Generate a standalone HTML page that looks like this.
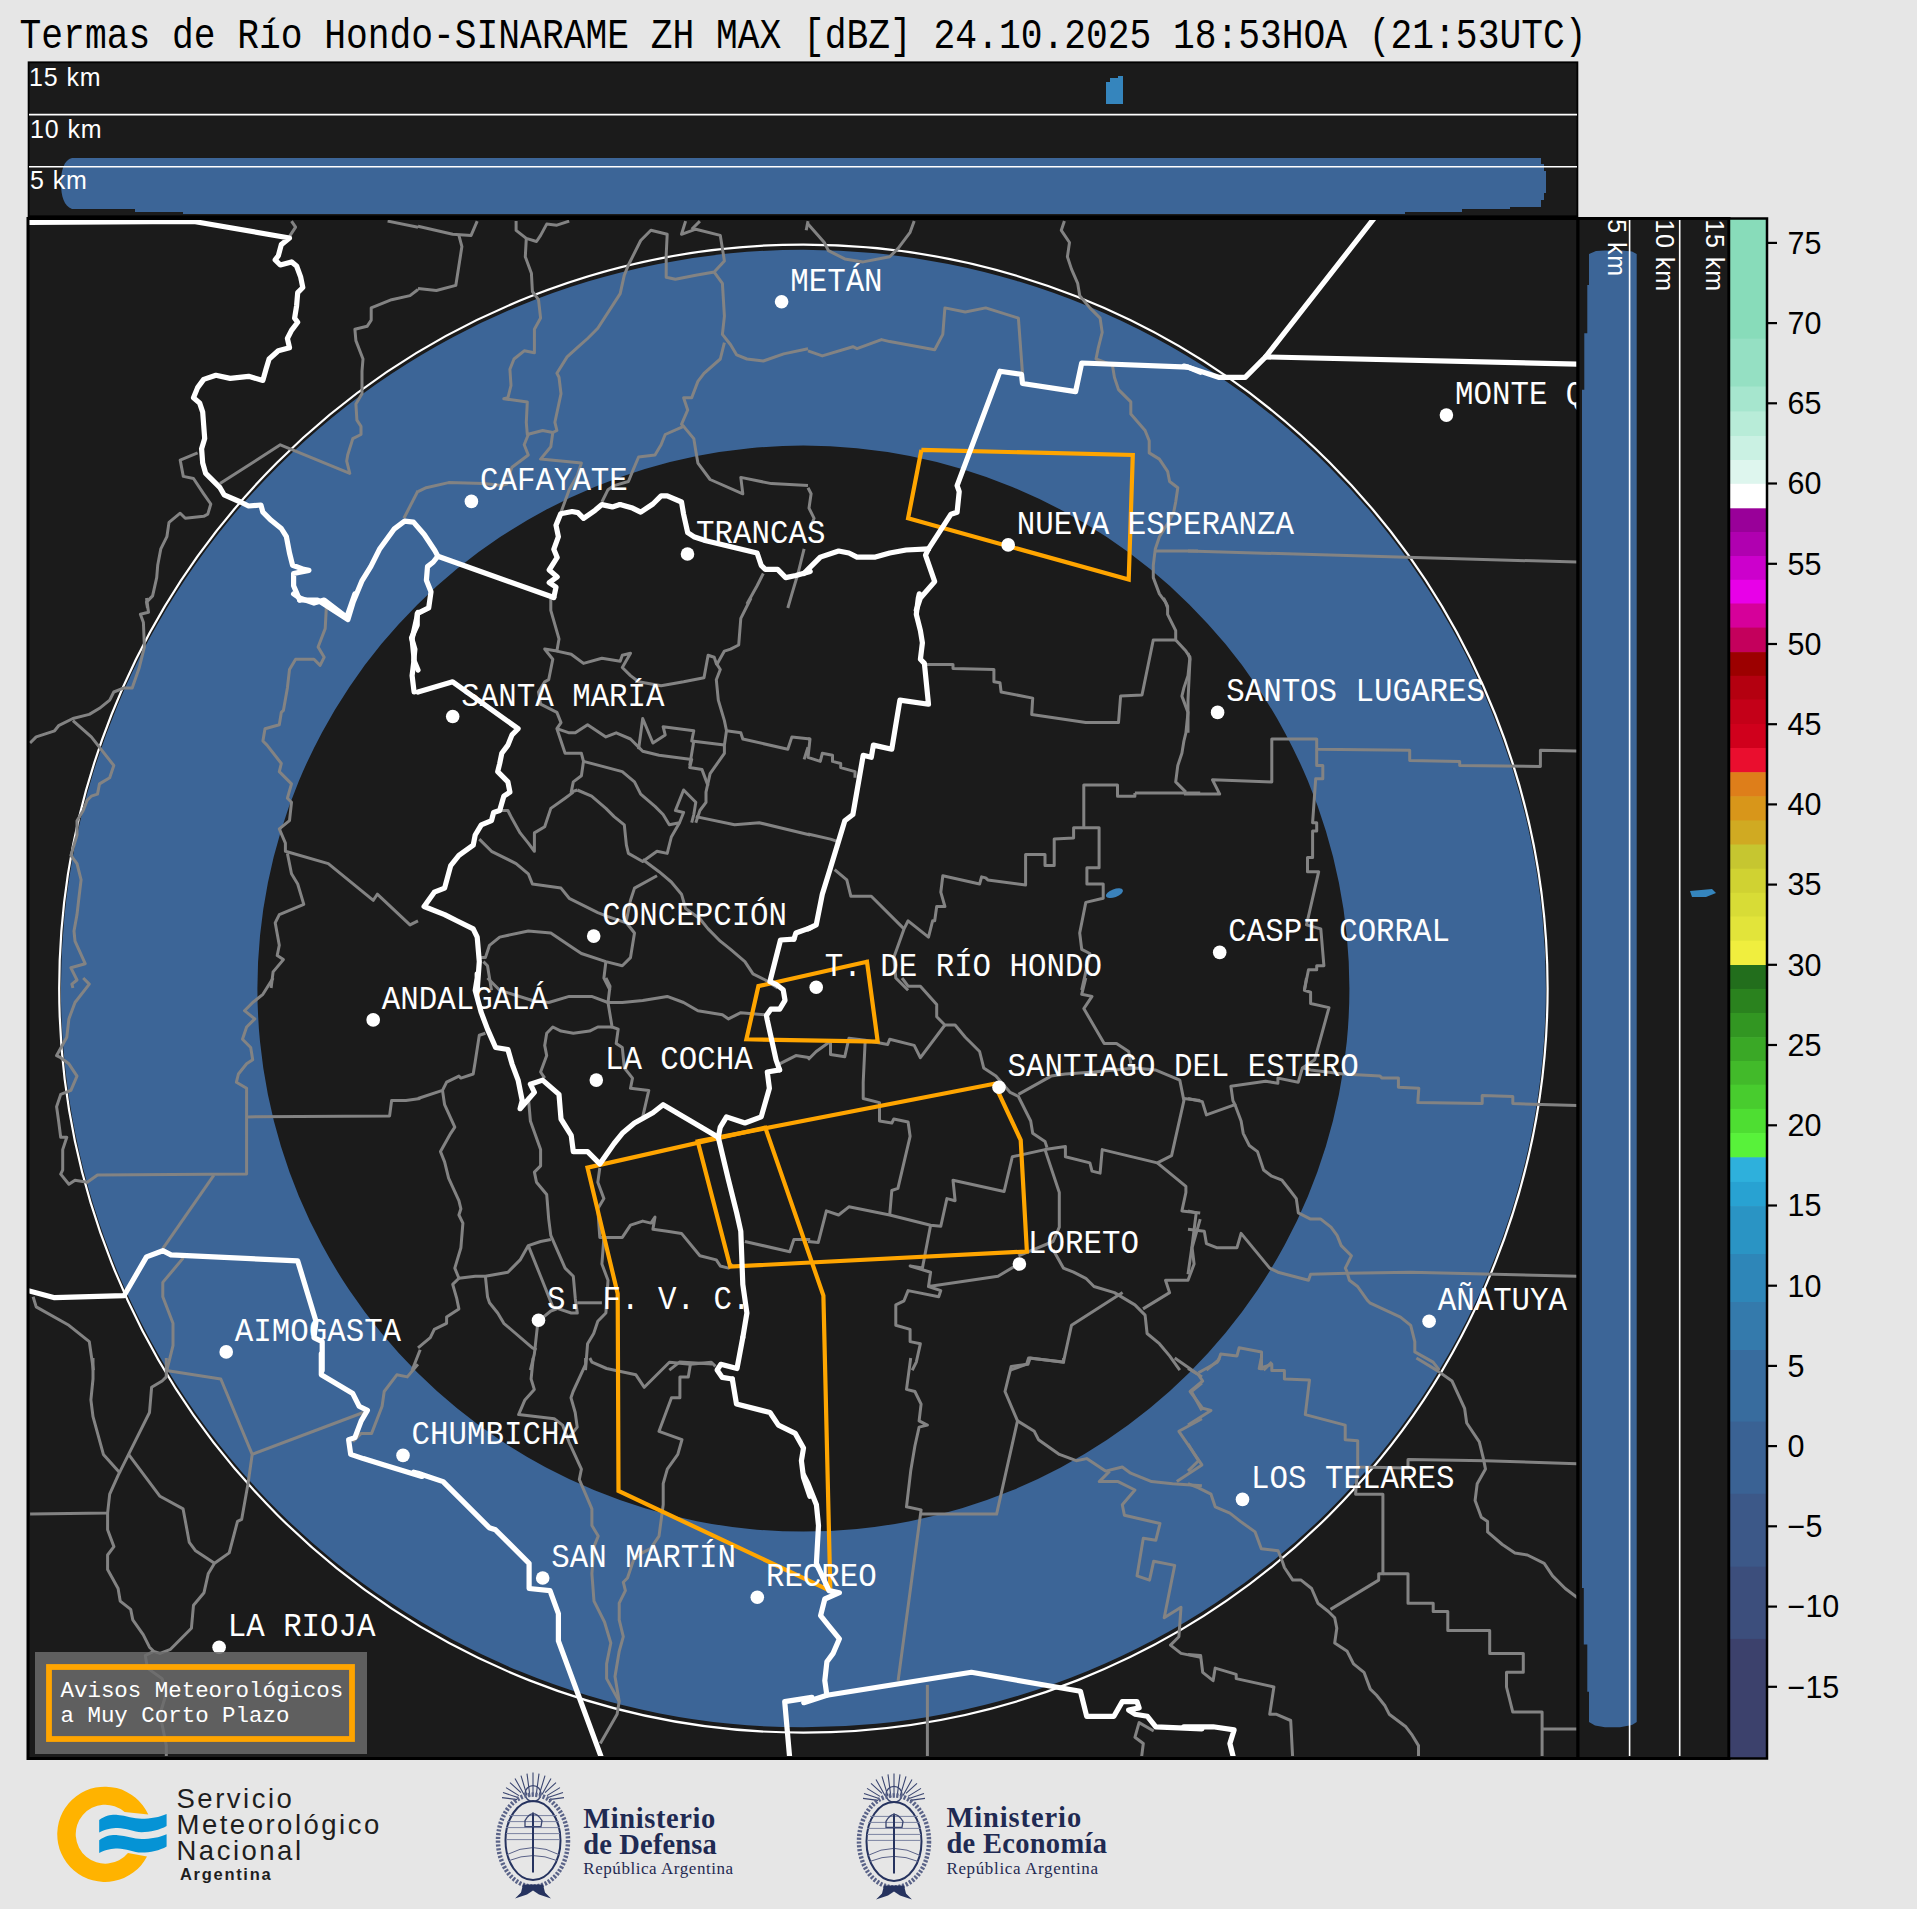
<!DOCTYPE html>
<html><head><meta charset="utf-8">
<style>
html,body{margin:0;padding:0;background:#e6e6e6;width:1917px;height:1909px;overflow:hidden}
svg{position:absolute;left:0;top:0}
</style></head><body>
<svg width="1917" height="1909" viewBox="0 0 1917 1909" xmlns="http://www.w3.org/2000/svg">
<defs>
<clipPath id="mapclip"><rect x="29.5" y="220" width="1547" height="1536"/></clipPath>
<clipPath id="topclip"><rect x="29" y="63" width="1548" height="153"/></clipPath>
<clipPath id="rpclip"><rect x="1579.5" y="220" width="149" height="1536"/></clipPath>
<g id="coat">
 <g stroke="#3a4570" stroke-width="1.1" fill="none">
  <path d="M0,-68 L0,-44 M-6,-67 L-3,-44 M6,-67 L3,-44 M-12,-65 L-6,-45 M12,-65 L6,-45 M-18,-62 L-9,-46 M18,-62 L9,-46 M-23,-58 L-12,-48 M23,-58 L12,-48 M-27,-53 L-14,-45 M27,-53 L14,-45 M-30,-48 L-15,-43 M30,-48 L15,-43 M-31,-43 L-16,-41 M31,-43 L16,-41"/>
 </g>
 <circle cx="0" cy="-47" r="8" fill="none" stroke="#3a4570" stroke-width="1.3"/>
 <ellipse cx="0" cy="0" rx="35" ry="46" fill="none" stroke="#5a6388" stroke-width="4.5" stroke-dasharray="2.2 1.6"/>
 <ellipse cx="0" cy="0" rx="27.5" ry="39.5" fill="none" stroke="#26335f" stroke-width="2"/>
 <g stroke="#7a82a0" stroke-width="1"><path d="M-24,-25 H24 M-26,-19 H26 M-27,-13 H27 M-27,-7 H27 M-27,-1 H27"/></g>
 <path d="M-26,14 Q0,0 26,14 M-24,20 Q0,10 24,20" stroke="#5a6288" stroke-width="1" fill="none"/>
 <path d="M0,-28 L0,32" stroke="#26335f" stroke-width="2"/>
 <path d="M-8,-20 Q0,-34 9,-20 L8,-14 L-8,-14 Z" fill="none" stroke="#3a4570" stroke-width="1.3"/>
 <path d="M-10,44 L10,44 L12,52 L18,58 L6,54 L0,50 L-6,54 L-18,58 L-12,52 Z" fill="#26335f"/>
</g>
</defs>

<text transform="translate(19.6,47.6) scale(1,1.15)" x="0" y="0" font-family="Liberation Mono" font-size="36.28" fill="#000">Termas de Río Hondo-SINARAME ZH MAX [dBZ] 24.10.2025 18:53HOA (21:53UTC)</text>

<!-- top panel -->
<rect x="28.6" y="62.3" width="1548.8" height="154" fill="#1b1b1b" stroke="#000" stroke-width="1.8"/>
<g clip-path="url(#topclip)">
<path d="M72,158 H1541 V164 H1544 V171 H1546 V193 H1544 V200 H1541 V207 H1510 V209 H1462 V212 H1405 V214 H183 V212 H135 V209 H72 C64,206 61,196 61,183 C61,170 64,160 72,158 Z" fill="#3c6597"/>
<path d="M1106,82 h4 v-4 h8 v-2 h5 v28 h-17 Z" fill="#3585bd"/>
<line x1="29" y1="114.6" x2="1577" y2="114.6" stroke="#fff" stroke-width="1.6"/>
<line x1="29" y1="166.8" x2="1577" y2="166.8" stroke="#fff" stroke-width="1.6"/>
<g font-family="Liberation Sans" font-size="25" letter-spacing="0.9" fill="#fff">
<text x="29" y="86.1">15 km</text><text x="30" y="138">10 km</text><text x="30" y="188.8">5 km</text>
</g>
</g>

<!-- main map -->
<rect x="28" y="218.5" width="1550" height="1540" fill="#1b1b1b" stroke="#000" stroke-width="3"/>
<g clip-path="url(#mapclip)">
<path fill-rule="evenodd" fill="#3c6597" d="M60.9,988.6 a742.5,738.5 0 1,0 1485,0 a742.5,738.5 0 1,0 -1485,0 Z M257.4,988.6 a546,543 0 1,0 1092,0 a546,543 0 1,0 -1092,0 Z"/>
<ellipse cx="803.4" cy="988.6" rx="744.2" ry="744" fill="none" stroke="#fff" stroke-width="2.2"/>
<ellipse cx="1114.4" cy="893.2" rx="9" ry="4" transform="rotate(-20 1114.4 893.2)" fill="#3a82bb"/>
<g fill="none" stroke="#838383" stroke-width="3" stroke-linejoin="round"><path d="M291.5,221.1 L295.6,227.2 L289.5,236.4"/><path d="M387.6,221.1 L418.0,227.2"/><path d="M418.0,289.5 L410.0,295.6 L391.6,299.7 L371.2,307.9 L371.2,320.1 L367.1,326.3 L354.9,329.3 L355.9,340.6 L363.0,359.0 L362.0,371.2 L362.0,393.7 L355.9,403.9 L356.9,420.2 L361.0,426.4 L361.0,434.5 L352.8,438.6 L347.7,455.0 L346.7,461.1 L349.8,473.4 L280.3,444.8 L220.0,483.6"/><path d="M197.6,452.9 L180.2,460.1 L183.3,476.4 L193.5,478.5 L203.7,493.8 L210.8,504.0 L207.8,514.2 L203.7,516.3 L185.3,518.3 L180.2,513.2 L169.0,522.4 L166.9,536.7 L160.8,548.9 L157.7,565.3 L156.7,577.6 L152.6,595.9 L146.5,602.1 L147.5,608.0"/><path d="M418.0,490.7 L403.9,518.3"/><path d="M418.0,226.2 L452.7,234.3 L471.1,235.4 L477.2,221.1"/><path d="M458.9,235.4 L461.9,246.6 L455.8,285.4 L436.4,290.5 L418.0,288.5"/><path d="M516.1,221.1 L516.1,230.3 L526.3,238.4 L536.5,241.5 L540.6,235.4 L546.7,224.1 L556.9,225.2 L569.2,221.1"/><path d="M526.3,238.4 L525.3,256.8 L531.4,273.2 L532.4,291.5 L538.5,299.7 L540.6,318.1 L534.4,329.3 L534.4,338.5 L534.4,352.8 L524.2,350.8 L514.0,359.0 L509.9,369.2 L511.0,385.5 L507.9,397.8 L503.8,398.8 L527.3,401.9 L526.3,422.3 L527.3,434.5 L542.6,430.5 L552.8,432.5 L556.9,430.5 L554.9,422.3 L561.0,393.7 L559.0,377.3 L556.9,373.3 L567.1,356.9 L577.3,347.7 L587.6,338.5 L597.8,328.3 L620.2,293.6 L624.3,275.2 L628.4,265.0 L640.7,240.5 L650.9,230.3 L667.2,234.3 L666.2,254.8 L666.2,277.2 L675.4,279.3 L695.8,275.2 L714.2,272.1 L724.4,260.9 L720.3,235.4 L695.8,229.2 L681.5,234.3 L685.6,221.1"/><path d="M699.9,221.1 L691.7,229.2"/><path d="M714.2,272.1 L722.4,283.4 L724.4,316.1 L722.4,334.4 L730.6,344.7 L736.7,354.9 L746.9,359.0 L763.3,361.0 L783.7,353.9 L808.0,348.7"/><path d="M724.4,342.6 L720.3,359.0 L704.0,373.3 L697.9,381.4 L691.7,397.8 L683.6,397.8 L687.7,410.0 L681.5,424.3 L683.6,426.4 L665.2,434.5 L661.1,444.8 L655.0,455.0 L638.6,457.0 L632.5,471.3 L628.4,481.5 L614.1,485.6 L608.0,489.7 L601.9,502.0"/><path d="M552.8,432.5 L550.8,446.8 L540.6,459.1 L581.4,463.1 L577.3,475.4 L569.2,489.7 L561.0,512.2"/><path d="M528.3,434.5 L524.2,444.8 L528.3,455.0 L512.0,467.2 L507.9,477.4"/><path d="M418.0,491.7 L426.2,487.7 L448.6,482.6 L483.4,483.6 L501.8,485.6 L507.9,483.6"/><path d="M683.6,426.4 L693.8,438.6 L695.8,450.9 L697.9,463.1 L710.1,479.5 L742.8,493.8 L740.8,477.4 L771.4,483.6 L808.0,485.6"/><path d="M804.1,548.9 L798.0,573.5 L791.9,593.9 L787.8,608.0"/><path d="M763.3,573.5 L757.1,585.7 L746.9,604.1"/><path d="M808.0,221.1 L806.2,230.3"/><path d="M808.0,224.1 L824.3,242.5 L828.4,250.7 L844.8,258.9 L863.2,261.9 L889.7,256.8 L897.9,248.6 L910.1,232.3 L914.2,221.1"/><path d="M808.0,350.8 L822.3,355.9 L852.9,346.7 L857.0,348.7 L881.5,339.6 L889.7,341.6 L934.7,349.8 L942.8,334.4 L944.9,307.9 L965.3,312.0 L985.7,307.9 L1018.4,318.1 L1022.5,373.3"/><path d="M1064.4,221.1 L1061.3,230.3 L1069.5,242.5 L1067.4,256.8 L1071.5,269.1 L1077.7,283.4 L1079.7,295.6 L1089.9,307.9 L1100.1,318.1 L1102.2,332.4 L1098.1,348.7 L1096.0,359.0 L1112.4,365.1 L1114.4,377.3 L1118.5,389.6 L1130.8,401.9 L1130.8,414.1 L1145.1,430.5 L1149.2,440.7 L1149.2,452.9 L1159.4,459.1 L1167.6,471.3 L1169.6,481.5 L1177.8,487.7 L1175.7,502.0 L1173.7,512.2 L1169.6,520.3 L1159.4,536.7 L1155.3,548.9 L1153.3,565.3 L1153.3,577.6 L1159.4,593.9 L1165.5,602.1 L1167.6,608.0"/><path d="M1155.3,551.0 L1198.0,551.0"/><path d="M808.0,487.7 L811.1,493.8 L809.0,508.1 L814.1,518.3 L810.0,528.5"/><path d="M1188.0,551.0 L1580.2,562.2"/><path d="M146.5,598.0 L148.5,612.3 L140.4,614.3 L143.4,622.5 L144.4,647.0 L139.3,667.5 L132.2,687.9 L124.0,687.9 L113.8,692.0 L109.7,700.1 L99.5,708.3 L89.3,714.4 L72.9,718.5 L58.6,725.7 L54.6,730.8 L36.2,736.9 L30.0,743.0"/><path d="M72.9,720.6 L91.3,736.9 L113.8,765.5 L109.7,777.8 L99.5,783.9 L97.5,794.1 L91.3,796.2 L87.2,800.2 L83.2,810.5 L77.0,820.7 L77.0,835.0 L70.9,855.4 L77.0,863.6 L81.1,879.9 L79.1,896.3 L77.0,914.6 L74.0,931.0 L75.0,941.2 L85.2,963.7 L70.9,967.8 L77.0,980.0 L71.9,984.1 L72.9,988.0"/><path d="M326.3,608.2 L325.2,628.6 L318.1,647.0 L324.2,657.2 L320.1,665.4 L314.0,659.3 L295.6,659.3 L289.5,669.5 L287.4,687.9 L283.4,710.4 L281.3,712.4 L279.3,724.7 L265.0,728.7 L262.9,741.0 L267.0,745.1 L281.3,763.5 L279.3,771.6 L291.5,783.9 L287.4,798.2 L291.5,802.3 L289.5,820.7 L279.3,828.8 L285.4,843.1 L285.4,851.3 L328.3,863.6 L373.3,900.3 L377.3,894.2 L410.0,924.9 L418.0,920.8"/><path d="M287.4,853.4 L291.5,873.8 L297.7,884.0 L303.8,904.4 L279.3,914.6 L275.2,922.8 L279.3,945.3 L277.2,955.5 L283.4,959.6 L273.1,971.9 L271.1,988.0"/><path d="M550.8,598.0 L550.8,610.3 L559.0,638.9 L556.9,651.1 L544.7,649.1 L552.8,659.3 L548.7,679.7 L544.7,681.8 L538.5,692.0 L540.6,704.2 L556.9,712.4 L561.0,722.6 L556.9,728.7 L565.1,753.3 L581.4,753.3 L583.5,761.4 L581.4,775.7 L573.3,781.9 L571.2,792.1 L577.3,790.0"/><path d="M556.9,651.1 L571.2,654.2 L583.5,663.4 L601.9,658.3 L620.2,661.3 L622.3,655.2 L630.5,653.2 L622.3,667.5 L630.5,675.6 L638.6,681.8 L661.1,685.8 L683.6,681.8 L704.0,677.7 L708.1,655.2 L714.2,657.2 L716.3,663.4 L720.3,669.5 L716.3,679.7 L718.3,700.1 L724.4,720.6 L726.5,730.8 L724.4,745.1 L724.4,753.3 L710.1,773.7 L706.0,792.1 L706.0,802.3 L699.9,810.5 L695.8,822.7"/><path d="M751.0,598.0 L740.8,618.4 L738.7,645.0 L730.6,649.1 L724.4,651.1 L716.3,665.4"/><path d="M556.9,728.7 L569.2,732.8 L575.3,732.8 L587.6,724.7 L605.9,736.9 L616.2,732.8 L630.5,739.0 L638.6,747.1 L642.7,751.2 L659.1,755.3 L691.7,759.4 L689.7,767.6 L702.0,769.6 L708.1,785.9"/><path d="M638.6,749.2 L642.7,718.5 L652.9,743.0 L665.2,734.9 L663.1,726.7 L693.8,730.8 L691.7,741.0 L724.4,745.1"/><path d="M693.8,741.0 L689.7,765.5"/><path d="M726.5,730.8 L740.8,732.8 L742.8,739.0 L787.8,749.2 L791.9,736.9 L810.2,739.0"/><path d="M808.0,747.1 L804.1,759.4"/><path d="M583.5,761.4 L622.3,771.6 L634.5,781.9 L640.7,794.1 L655.0,806.4 L663.1,814.5 L669.3,824.8 L679.5,822.7 L683.6,812.5 L675.4,810.5 L683.6,790.0 L695.8,802.3 L693.8,814.5 L691.7,822.7"/><path d="M573.3,792.1 L565.1,798.2 L550.8,808.4 L544.7,826.8 L534.4,832.9 L534.4,851.3 L528.3,843.1 L520.1,832.9 L512.0,818.6 L507.9,810.5 L499.7,810.5"/><path d="M577.3,790.0 L591.6,796.2 L605.9,808.4 L614.1,816.6 L624.3,824.8 L626.4,845.2 L628.4,853.4 L642.7,861.5 L657.0,851.3 L667.2,853.4 L671.3,837.0 L679.5,822.7"/><path d="M695.8,816.6 L734.6,824.8 L759.2,822.7 L810.2,835.0"/><path d="M642.7,859.5 L659.1,871.7 L671.3,882.0 L681.5,894.2 L685.6,908.5 L699.9,918.7 L708.1,928.9 L720.3,941.2 L730.6,949.4 L744.9,961.6 L753.0,973.9 L765.3,980.0 L777.6,988.0"/><path d="M479.3,839.1 L491.5,851.3 L516.1,863.6 L528.3,873.8 L532.4,884.0 L561.0,888.1 L569.2,898.3 L597.8,912.6 L608.0,916.7 L626.4,922.8 L634.5,933.0 L632.5,945.3 L630.5,957.6 L622.3,965.7 L605.9,961.6 L581.4,953.5 L575.3,949.4 L550.8,933.0 L528.3,931.0 L499.7,937.1 L489.5,945.3 L485.4,957.6 L479.3,957.6"/><path d="M657.0,875.8 L634.5,888.1 L630.5,900.3 L626.4,920.8"/><path d="M605.9,961.6 L603.9,978.0 L610.0,990.2"/><path d="M483.4,961.6 L487.5,965.7 L491.5,990.2"/><path d="M924.4,664.4 L953.0,664.4 L953.0,668.5 L993.9,669.5 L993.9,681.8 L1000.0,682.8 L1001.1,692.0 L1032.7,698.1 L1031.7,714.4 L1085.8,722.6 L1118.5,722.6 L1120.6,696.1 L1142.0,695.0 L1153.3,639.9 L1175.7,639.9"/><path d="M1163.5,598.0 L1167.6,606.2 L1167.6,614.3 L1175.7,630.7 L1175.7,639.9 L1185.9,651.1 L1190.0,657.2 L1188.0,675.6 L1183.9,687.9 L1181.9,696.1 L1188.0,712.4 L1185.9,732.8 L1183.9,741.0 L1181.9,753.3 L1177.8,765.5 L1175.7,781.9 L1185.9,792.1"/><path d="M1134.9,793.1 L1200.2,793.1"/><path d="M1134.9,793.1 L1134.9,796.2 L1117.5,796.2 L1117.5,784.9 L1083.8,784.9 L1083.8,827.8 L1073.6,827.8 L1073.6,838.0 L1054.2,839.1 L1054.2,865.6 L1045.0,865.6 L1045.0,854.4 L1025.6,854.4 L1025.6,885.0 L987.8,879.9 L985.7,877.9 L981.6,876.9 L979.6,884.0 L942.8,875.8 L940.8,892.2 L944.9,906.5 L936.7,906.5 L934.7,920.8 L932.6,920.8 L928.5,937.1 L908.1,920.8 L904.0,928.9 L893.8,957.6 L895.8,978.0 L908.1,990.2"/><path d="M1083.8,827.8 L1099.1,827.8 L1099.1,867.7 L1086.9,867.7 L1086.9,884.0 L1103.2,884.0 L1103.2,898.3 L1085.8,902.4 L1079.7,933.0 L1081.7,949.4 L1089.9,953.5 L1081.7,990.2"/><path d="M808.0,739.0 L810.0,739.0 L808.0,757.3 L820.3,761.4 L822.3,753.3 L832.5,755.3 L832.5,761.4 L840.7,763.5 L840.7,767.6 L855.0,771.6 L855.0,777.8"/><path d="M808.0,834.0 L830.5,839.1 L836.6,841.1"/><path d="M834.6,869.7 L846.8,879.9 L850.9,896.3 L871.3,896.3 L904.0,928.9"/><path d="M1183.9,794.1 L1219.7,794.1 L1212.5,779.8 L1271.8,781.9 L1271.8,739.0 L1316.7,739.0 L1316.7,749.2 L1409.7,750.2 L1409.7,760.4 L1459.7,761.4 L1459.7,765.5 L1540.4,766.5 L1540.4,750.2 L1580.2,751.2"/><path d="M1316.7,749.2 L1316.7,765.5 L1322.8,765.5 L1322.8,778.8 L1315.7,778.8 L1312.6,822.7 L1316.7,822.7 L1316.7,830.9 L1312.6,830.9 L1312.6,857.4 L1307.5,857.4 L1307.5,871.7 L1318.7,871.7 L1306.5,924.9 L1320.8,928.9 L1323.9,965.7 L1316.7,965.7 L1316.7,969.8 L1308.5,969.8 L1304.4,990.2"/><path d="M1188.0,653.2 L1190.0,659.3 L1188.0,700.1 L1188.0,732.8"/><path d="M83.2,978.0 L89.3,984.1 L75.0,1002.5 L68.9,1018.9 L66.8,1037.2 L56.6,1055.6 L60.7,1057.7 L68.9,1063.8 L77.0,1076.1 L70.9,1090.4 L60.7,1094.4 L56.6,1106.7 L58.6,1121.0 L60.7,1137.3 L66.8,1137.3 L62.7,1149.6 L62.7,1170.0 L60.7,1174.1 L68.9,1184.3 L75.0,1180.2 L87.2,1182.3 L97.5,1175.1 L246.6,1174.1 L246.6,1088.3 L236.4,1082.2 L238.4,1074.0 L246.6,1063.8 L252.7,1059.7 L250.7,1047.5 L242.5,1039.3 L246.6,1027.0 L254.8,1018.9 L244.5,1010.7 L252.7,1002.5 L262.9,994.3 L273.1,978.0"/><path d="M246.6,1116.9 L389.6,1115.9 L391.6,1100.6 L405.9,1100.6 L420.2,1098.5"/><path d="M213.9,1175.1 L162.8,1248.7"/><path d="M183.3,1257.9 L162.8,1282.4 L162.8,1296.7 L173.0,1323.3 L173.0,1345.7 L166.9,1370.2"/><path d="M33.1,1296.7 L36.2,1306.9 L68.9,1325.3 L89.3,1341.6 L93.4,1370.2"/><path d="M420.2,1349.8 L412.1,1370.2"/><path d="M487.5,978.0 L499.7,990.3 L532.4,1000.5 L548.7,1002.5 L569.2,996.4 L591.6,996.4 L608.0,1002.5 L622.3,1002.5 L642.7,1000.5 L667.2,996.4 L683.6,1002.5 L697.9,1010.7 L722.4,1014.8 L728.5,1018.9 L740.8,1012.7 L765.3,1014.8"/><path d="M605.9,978.0 L610.0,986.2 L608.0,1002.5 L612.1,1027.0 L618.2,1029.1 L616.2,1043.4 L622.3,1047.5 L624.3,1067.9 L632.5,1078.1 L630.5,1088.3 L648.8,1090.4 L642.7,1116.9"/><path d="M612.1,1027.0 L597.8,1027.0 L589.6,1031.1 L573.3,1033.2 L561.0,1031.1 L552.8,1027.0 L546.7,1033.2 L544.7,1045.4 L546.7,1055.6 L540.6,1072.0 L544.7,1078.1"/><path d="M485.4,1033.2 L479.3,1035.2 L475.2,1061.8 L473.2,1074.0 L460.9,1078.1 L458.9,1076.1 L446.6,1082.2 L442.5,1090.4 L418.0,1098.5"/><path d="M442.5,1090.4 L444.6,1104.7 L454.8,1127.1 L450.7,1133.3 L440.5,1151.6 L444.6,1161.9 L448.6,1178.2 L458.9,1200.7 L460.9,1208.8 L458.9,1215.0 L462.9,1223.1 L460.9,1247.7 L454.8,1268.1 L458.9,1278.3 L475.2,1276.3 L485.4,1276.3 L507.9,1272.2 L520.1,1259.9 L528.3,1245.6 L540.6,1241.5 L550.8,1239.5"/><path d="M528.3,1096.5 L530.4,1121.0 L540.6,1149.6 L540.6,1165.9 L534.4,1172.1 L536.5,1182.3 L546.7,1194.5 L548.7,1219.1 L550.8,1235.4 L565.1,1268.1 L573.3,1276.3 L575.3,1298.7 L577.3,1313.0 L571.2,1313.0 L552.8,1306.9 L540.6,1276.3 L528.3,1245.6"/><path d="M599.8,1168.0 L597.8,1182.3 L603.9,1198.6 L597.8,1208.8 L599.8,1237.4 L603.9,1237.4 L601.9,1264.0 L608.0,1280.3 L605.9,1313.0 L597.8,1321.2 L593.7,1333.5 L587.6,1343.7 L585.5,1370.2"/><path d="M603.9,1237.4 L622.3,1237.4 L630.5,1225.2 L642.7,1221.1 L650.9,1223.1 L655.0,1217.0 L652.9,1229.3 L667.2,1231.3 L681.5,1233.4 L699.9,1255.8 L716.3,1259.9 L720.3,1266.0 L728.5,1268.1 L732.6,1264.0"/><path d="M744.9,1241.5 L789.8,1251.7 L793.9,1239.5 L810.2,1239.5"/><path d="M577.3,1302.8 L601.9,1302.8"/><path d="M485.4,1276.3 L487.5,1296.7 L489.5,1302.8 L497.7,1313.0 L503.8,1323.3 L532.4,1347.8 L536.5,1349.8"/><path d="M538.5,1321.2 L550.8,1311.0 L556.9,1308.9"/><path d="M537.5,1325.3 L534.4,1353.9 L530.4,1370.2"/><path d="M418.0,1347.8 L430.3,1337.6 L434.3,1329.4 L446.6,1323.3 L446.6,1317.1 L458.9,1308.9 L456.8,1298.7 L452.7,1284.4 L458.9,1278.3"/><path d="M779.6,1063.8 L795.9,1055.6 L810.2,1057.7"/><path d="M669.3,1370.2 L679.5,1362.1 L712.2,1364.1"/><path d="M902.0,978.0 L908.1,986.2 L920.4,986.2 L936.7,1004.6 L936.7,1016.8 L944.9,1025.0 L955.1,1025.0 L965.3,1037.2 L979.6,1051.5 L983.7,1067.9 L995.9,1076.1 L1010.2,1092.4 L1018.4,1096.5 L1030.7,1121.0 L1032.7,1133.3 L1045.0,1141.4 L1047.0,1147.6"/><path d="M944.9,1025.0 L920.4,1057.7 L914.2,1045.4 L889.7,1039.3 L887.7,1044.4 L865.2,1040.3 L848.9,1038.3 L844.8,1056.7 L830.5,1054.6 L830.5,1041.3 L816.2,1051.5 L808.0,1059.7"/><path d="M865.2,1040.3 L863.2,1082.2 L863.2,1098.5 L879.5,1102.6 L879.5,1121.0 L891.8,1123.0 L893.8,1119.0 L908.1,1122.0 L910.1,1136.3 L897.9,1188.4 L891.8,1190.5 L889.7,1215.0"/><path d="M808.0,1241.5 L818.2,1242.6 L826.4,1210.9 L838.6,1215.0 L848.9,1206.8 L889.7,1215.0 L930.6,1225.2 L940.8,1226.2 L946.9,1198.6 L955.1,1200.7 L953.0,1180.2 L1004.1,1191.5 L1012.3,1156.8 L1045.0,1149.6 L1065.4,1146.5 L1065.4,1156.8 L1089.9,1162.9 L1092.0,1171.1 L1100.1,1173.1 L1102.2,1149.6 L1157.3,1162.9 L1171.6,1155.7 L1183.9,1100.6 L1179.8,1080.1 L1155.3,1069.9 L1134.9,1067.9 L1114.4,1069.9 L1094.0,1072.0 L1065.4,1074.0 L1051.1,1076.1 L1018.4,1094.4"/><path d="M1157.3,1162.9 L1185.9,1186.4 L1185.9,1192.5 L1181.9,1210.9 L1200.2,1212.9"/><path d="M1200.2,1219.1 L1192.1,1247.7 L1194.1,1264.0 L1188.0,1280.3 L1165.5,1280.3 L1169.6,1292.6 L1143.0,1308.9"/><path d="M1045.0,1149.6 L1059.3,1192.5 L1059.3,1227.2 L1053.1,1241.5 L1018.4,1255.8"/><path d="M1085.8,978.0 L1081.7,994.3 L1092.0,996.4 L1083.8,1008.6 L1104.2,1043.4 L1116.5,1043.4 L1128.7,1051.5 L1130.8,1063.8"/><path d="M1183.9,1098.5 L1200.2,1100.6"/><path d="M930.6,1225.2 L922.4,1268.1 L910.1,1266.0 L930.6,1272.2 L928.5,1286.5 L998.0,1276.3 L1018.4,1264.0"/><path d="M928.5,1286.5 L940.8,1290.6 L938.7,1296.7 L908.1,1290.6 L904.0,1300.8 L895.8,1304.9 L895.8,1325.3 L910.1,1329.4 L910.1,1341.6 L920.4,1343.7 L916.3,1362.1 L912.2,1370.2"/><path d="M1053.1,1249.7 L1063.4,1268.1 L1073.6,1272.2 L1085.8,1278.3 L1094.0,1286.5 L1114.4,1292.6 L1134.9,1304.9 L1145.1,1315.1 L1147.1,1333.5 L1159.4,1343.7 L1169.6,1355.9 L1179.8,1370.2"/><path d="M1122.6,1292.6 L1071.5,1325.3 L1063.4,1362.1 L1028.6,1358.0 L1026.6,1364.1 L1010.2,1370.2"/><path d="M1306.5,978.0 L1304.4,990.3 L1310.6,992.3 L1310.6,1003.5 L1329.0,1007.6 L1314.7,1059.7 L1302.4,1067.9 L1298.3,1082.2 L1277.9,1078.1 L1277.9,1083.2 L1265.6,1081.2 L1230.9,1086.3 L1232.9,1100.6 L1235.0,1104.7 L1206.4,1114.9 L1202.3,1101.6 L1188.0,1098.5"/><path d="M1302.4,1067.9 L1310.6,1069.9 L1343.3,1074.0 L1380.0,1076.1 L1382.1,1078.1 L1398.4,1078.1 L1398.4,1087.3 L1418.8,1088.3 L1417.8,1102.6 L1482.2,1103.6 L1482.2,1095.5 L1512.8,1096.5 L1512.8,1103.6 L1580.2,1105.7"/><path d="M1235.0,1104.7 L1241.1,1121.0 L1243.2,1133.3 L1249.3,1145.5 L1257.5,1151.6 L1263.6,1170.0 L1271.8,1176.2 L1282.0,1180.2 L1290.1,1190.5 L1296.3,1198.6 L1298.3,1212.9 L1310.6,1219.1 L1320.8,1219.1 L1331.0,1227.2 L1337.1,1235.4 L1341.2,1245.6 L1351.4,1255.8 L1345.3,1268.1 L1347.3,1272.2"/><path d="M1188.0,1210.9 L1196.2,1212.9 L1192.1,1245.6 L1188.0,1274.2"/><path d="M1188.0,1229.3 L1204.3,1231.3 L1206.4,1243.6 L1216.6,1247.7 L1237.0,1247.7 L1241.1,1233.4 L1269.7,1268.1 L1277.9,1272.2 L1308.5,1280.3 L1310.6,1274.2 L1347.3,1273.2 L1410.7,1272.2 L1580.2,1276.3"/><path d="M1347.3,1273.2 L1349.4,1280.3 L1357.6,1286.5 L1367.8,1300.8 L1369.8,1302.8 L1400.5,1317.1 L1410.7,1325.3 L1414.8,1341.6 L1414.8,1351.9 L1433.1,1362.1 L1439.3,1370.2"/><path d="M1206.4,1370.2 L1218.6,1360.0 L1220.7,1353.9 L1237.0,1355.9 L1239.1,1347.8 L1261.5,1351.9 L1261.5,1370.2"/><path d="M1263.6,1370.2 L1271.8,1362.1"/><path d="M93.0,1358.0 L93.0,1379.0 L90.9,1399.9 L93.0,1416.7 L103.4,1454.4 L120.2,1473.2"/><path d="M166.3,1358.0 L166.3,1376.9 L162.1,1381.0 L151.6,1387.3 L149.5,1412.5 L128.6,1454.4 L118.1,1475.3 L109.7,1494.2 L107.6,1513.1 L30.1,1514.1"/><path d="M107.6,1513.1 L107.6,1529.8 L113.9,1546.6 L107.6,1555.0 L107.6,1569.6 L118.1,1588.5 L120.2,1601.1 L130.7,1609.4 L132.8,1619.9 L143.2,1634.6 L149.5,1647.2 L153.7,1651.3 L160.0,1653.4 L170.5,1649.3 L191.4,1628.3 L193.5,1605.2 L204.0,1592.7 L208.2,1573.8 L214.5,1563.3 L229.2,1552.9 L237.5,1521.4 L241.7,1519.3 L248.0,1483.7 L252.2,1454.4 L220.8,1379.0 L166.3,1370.6"/><path d="M128.6,1454.4 L160.0,1496.3 L183.1,1508.9 L189.3,1542.4 L195.6,1550.8 L214.5,1563.3"/><path d="M252.2,1454.4 L363.3,1412.5"/><path d="M417.9,1364.3 L407.3,1376.9 L396.8,1374.8 L384.2,1391.5 L382.1,1406.2 L371.6,1433.4 L361.2,1433.4 L352.8,1441.8"/><path d="M153.7,1651.3 L145.3,1655.5 L147.4,1668.1 L162.1,1678.6 L166.3,1693.3 L160.0,1714.2 L166.3,1745.6 L166.3,1760.3"/><path d="M533.2,1358.0 L531.1,1379.0 L534.3,1389.4 L524.9,1399.9 L518.6,1414.6 L554.2,1418.8 L562.6,1425.1 L568.9,1441.8 L581.4,1469.1 L579.3,1479.5 L585.6,1494.2 L591.9,1508.9 L591.9,1525.6 L598.2,1536.1 L594.0,1546.6 L591.9,1573.8 L594.0,1601.1 L604.5,1622.0 L610.8,1643.0 L606.6,1663.9 L606.6,1678.6 L619.2,1701.6 L617.1,1714.2 L600.3,1743.5"/><path d="M585.6,1358.0 L585.6,1364.3 L573.1,1391.5 L571.0,1397.8 L575.2,1412.5 L577.2,1427.1 L568.9,1437.6"/><path d="M589.8,1358.0 L591.9,1362.2 L606.6,1368.5 L635.9,1374.8 L644.3,1387.3 L669.4,1362.2 L690.4,1364.3 L711.3,1362.2 L715.5,1366.4"/><path d="M690.4,1364.3 L688.3,1376.9 L679.9,1376.9 L679.9,1397.8 L671.5,1397.8 L659.0,1431.3 L682.0,1439.7 L677.8,1454.4 L667.3,1469.1 L663.2,1483.7 L663.2,1504.7 L659.0,1536.1 L650.6,1548.7 L642.2,1552.9 L633.8,1559.2 L627.5,1578.0 L623.3,1582.2 L625.4,1590.6 L619.2,1603.2 L619.2,1619.9 L623.3,1636.7 L619.2,1651.3 L615.0,1676.5 L619.2,1701.6"/><path d="M910.7,1358.0 L906.5,1389.4 L914.9,1391.5 L921.1,1404.1 L919.1,1420.9 L927.4,1425.1 L919.1,1427.1 L914.9,1446.0 L910.7,1471.1 L906.5,1506.8 L921.1,1509.9 L898.1,1680.7"/><path d="M921.1,1514.1 L996.6,1514.1 L1017.5,1420.9 L1005.0,1391.5 L1011.2,1366.4 L1028.0,1364.3 L1030.1,1358.0 L1063.6,1362.2 L1063.6,1358.0"/><path d="M1017.5,1420.9 L1034.3,1431.3 L1038.5,1439.7 L1059.4,1454.4 L1076.2,1460.7 L1086.7,1458.6 L1105.5,1471.1 L1122.3,1467.0 L1130.7,1473.2 L1151.6,1481.6 L1172.6,1483.7 L1201.9,1485.8"/><path d="M1109.7,1471.1 L1099.3,1481.6 L1118.1,1481.6 L1134.9,1490.0 L1122.3,1504.7 L1124.4,1515.2 L1160.0,1523.5 L1155.8,1540.3 L1143.3,1538.2 L1137.0,1575.9 L1149.5,1580.1 L1153.7,1561.2 L1174.7,1565.4 L1164.2,1617.8 L1181.0,1607.3 L1178.9,1636.7 L1170.5,1645.1 L1181.0,1653.4 L1201.9,1657.6"/><path d="M1174.7,1358.0 L1201.9,1376.9"/><path d="M1201.9,1383.1 L1191.4,1391.5 L1201.9,1410.4"/><path d="M1201.9,1418.8 L1178.9,1431.3 L1201.9,1464.9 L1176.8,1481.6"/><path d="M927.4,1684.9 L927.4,1760.3"/><path d="M1153.7,1731.0 L1139.1,1722.6 L1134.9,1737.3 L1143.3,1743.5 L1141.2,1760.3"/><path d="M1188.0,1368.5 L1198.5,1374.8 L1202.7,1381.0 L1190.1,1391.5 L1202.7,1408.3 L1211.0,1410.4 L1188.0,1425.1"/><path d="M1219.4,1358.0 L1217.3,1362.2 L1198.5,1372.7"/><path d="M1188.0,1443.9 L1198.5,1460.7 L1188.0,1471.1"/><path d="M1261.3,1358.0 L1259.2,1368.5 L1271.8,1364.3 L1271.8,1370.6 L1284.4,1370.6 L1284.4,1379.0 L1309.5,1380.0 L1305.3,1414.6 L1345.2,1425.1 L1345.2,1439.7 L1357.7,1440.8 L1357.7,1467.0 L1408.0,1468.0 L1408.0,1459.6 L1485.5,1460.7 L1581.9,1463.8"/><path d="M1357.7,1467.0 L1355.6,1494.2 L1382.9,1494.2 L1382.9,1573.8 L1378.7,1573.8 L1378.7,1580.1 L1330.5,1609.4"/><path d="M1416.4,1358.0 L1437.3,1370.6 L1452.0,1381.0 L1464.6,1408.3 L1466.7,1423.0 L1479.3,1441.8 L1483.4,1458.6 L1485.5,1469.1 L1477.2,1483.7 L1475.1,1500.5 L1481.3,1517.2 L1487.6,1521.4 L1487.6,1531.9 L1502.3,1544.5 L1514.9,1552.9 L1527.4,1555.0 L1544.2,1563.3 L1552.6,1575.9 L1565.2,1588.5 L1581.9,1601.1"/><path d="M1188.0,1483.7 L1198.5,1487.9 L1211.0,1494.2 L1215.2,1506.8 L1229.9,1513.1 L1240.4,1521.4 L1255.1,1531.9 L1261.3,1548.7 L1278.1,1550.8 L1282.3,1561.2 L1284.4,1567.5 L1292.8,1580.1 L1301.1,1580.1 L1311.6,1588.5 L1317.9,1603.2 L1328.4,1611.5 L1334.7,1617.8 L1336.8,1628.3 L1334.7,1643.0 L1347.2,1651.3 L1353.5,1663.9 L1364.0,1672.3 L1370.3,1689.1 L1376.6,1695.3 L1385.0,1705.8 L1389.2,1714.2 L1405.9,1726.8 L1412.2,1735.2 L1418.5,1745.6 L1418.5,1760.3"/><path d="M1382.9,1573.8 L1408.0,1573.8 L1408.0,1603.2 L1433.2,1603.2 L1433.2,1611.5 L1447.8,1611.5 L1447.8,1630.4 L1489.7,1630.4 L1489.7,1653.4 L1523.3,1653.4 L1523.3,1672.3 L1506.5,1672.3 L1506.5,1687.0 L1512.8,1712.1 L1542.1,1712.1 L1542.1,1760.3"/><path d="M1542.1,1728.9 L1581.9,1728.9"/><path d="M1188.0,1654.5 L1200.6,1655.5 L1202.7,1672.3 L1213.1,1680.7 L1215.2,1668.1 L1236.2,1674.4 L1236.2,1678.6 L1273.9,1687.0 L1269.7,1714.2 L1276.0,1714.2 L1290.7,1720.5 L1292.8,1760.3"/></g>
<g fill="none" stroke="#ffa500" stroke-width="4.2" stroke-linejoin="miter"><path d="M921.4,449.9 L1132.8,455.0 L1128.7,579.6 L908.1,518.3 L921.4,449.9"/><path d="M758.4,986.1 L867.0,961.7 L877.7,1041.5 L746.4,1039.3 L758.4,986.1 L867.0,961.7"/><path d="M587.5,1167.7 L765.3,1127.6 L823.4,1295.6 L830.3,1589.4 L831.1,1591.2 L618.5,1490.9 L617.7,1293.8 L587.5,1167.7 L765.3,1127.6"/><path d="M697.7,1141.4 L994.4,1083.8 L1020.7,1140.1 L1026.9,1251.5 L730.2,1266.6 L697.7,1141.4 L994.4,1083.8"/></g>
<g fill="none" stroke="#ffffff" stroke-width="5.2" stroke-linejoin="round" stroke-linecap="round"><path d="M26.0,222.5 L193.9,221.5 L289.5,238.0 L281.3,244.6 L278.3,255.8 L275.2,259.9 L280.3,265.0 L291.5,261.9 L296.6,266.0 L300.7,277.2 L302.8,287.5 L297.7,292.6 L296.6,305.8 L294.6,318.1 L297.7,322.2 L291.5,330.4 L287.4,338.5 L289.5,347.7 L278.3,350.8 L269.1,359.0 L266.0,369.2 L262.9,380.4 L248.6,376.3 L230.2,378.4 L215.9,375.3 L203.7,379.4 L197.6,387.6 L193.5,397.8 L199.6,402.9 L202.7,412.1 L204.7,438.6 L201.6,448.8 L202.7,463.1 L205.7,473.4 L220.0,487.7 L224.1,494.8 L240.5,502.0 L248.6,506.0 L260.9,505.0 L262.9,512.2 L271.1,520.3 L281.3,528.5 L286.4,536.7 L289.5,553.0 L292.6,565.3 L303.8,569.4 L308.9,570.4 L293.6,573.5 L293.6,585.7 L299.7,600.0"/><path d="M620.0,504.6 L632.5,508.1 L640.7,512.2 L652.9,504.0 L661.1,495.8 L667.2,495.8 L681.5,502.0 L683.6,514.2 L687.7,532.6 L693.8,536.7 L706.0,540.8 L757.1,553.0 L761.2,565.3 L765.3,569.4 L777.6,569.4 L785.7,577.6 L795.9,575.5 L810.2,571.4"/><path d="M803.9,573.5 L808.0,569.4 L820.3,557.1 L838.6,551.0 L848.9,553.0 L857.0,557.1 L875.4,557.1 L889.7,553.0 L906.1,550.0 L928.5,548.9"/><path d="M928.5,548.9 L951.0,514.2 L957.1,512.2 L959.2,491.7 L957.1,485.6 L1000.0,371.2 L1021.5,374.3 L1022.5,383.5 L1075.6,391.6 L1081.7,363.0 L1188.0,367.1 L1200.2,372.2"/><path d="M928.5,548.9 L925.5,555.1 L934.7,581.6 L920.4,598.0 L916.3,610.2"/><path d="M1183.9,366.1 L1188.0,367.1 L1218.6,377.3 L1245.2,377.3 L1265.6,356.9 L1375.9,216.0"/><path d="M1265.6,356.9 L1580.2,364.1"/><path d="M293.6,593.9 L299.7,598.0 L314.0,603.1 L324.2,600.0 L346.7,617.4 L354.9,593.9"/><path d="M418.0,612.3 L412.1,638.9 L414.1,659.3 L412.1,675.6 L414.1,692.0"/><path d="M418.0,692.0 L452.7,681.8 L518.1,728.7 L512.0,734.9 L507.9,745.1 L501.8,753.3 L499.7,763.5 L497.7,771.6 L507.9,781.9 L509.9,792.1 L503.8,796.2 L499.7,810.5 L493.6,812.5 L491.5,820.7 L481.3,824.8 L475.2,835.0 L473.2,845.2 L458.9,855.4 L450.7,865.6 L444.6,888.1 L434.3,892.2 L424.1,906.5 L444.6,914.6 L456.8,920.8 L473.2,928.9 L477.2,937.1 L479.3,961.6 L477.2,990.2"/><path d="M810.2,927.9 L795.9,933.0 L793.9,939.2"/><path d="M919.3,593.9 L918.3,598.0 L916.3,614.3 L920.4,630.7 L922.4,642.9 L920.4,659.3 L924.4,663.4 L928.5,704.2 L899.9,700.1 L891.8,749.2 L873.4,745.1 L871.3,757.3 L863.2,755.3 L852.9,814.5 L844.8,820.7 L830.5,867.7 L822.3,894.2 L816.2,924.9 L808.0,928.9"/><path d="M28.0,1290.6 L54.6,1297.7 L124.0,1295.7 L146.5,1256.9 L162.8,1250.7 L171.0,1254.8 L297.7,1260.9 L316.0,1321.2 L314.0,1337.6 L322.2,1341.6 L322.2,1370.2"/><path d="M477.2,973.9 L477.2,978.0 L475.2,990.3 L481.3,1012.7 L487.5,1029.1 L495.6,1047.5 L507.9,1049.5 L512.0,1063.8 L518.1,1080.1 L522.2,1100.6 L520.1,1108.7 L534.4,1092.4 L530.4,1084.2 L542.6,1080.1 L559.0,1094.4 L561.0,1119.0 L571.2,1135.3 L573.3,1151.6 L587.6,1151.6 L599.8,1163.9 L614.1,1143.5 L622.3,1133.3 L634.5,1123.0 L652.9,1112.8 L663.1,1104.7 L718.3,1137.3"/><path d="M718.3,1137.3 L720.3,1127.1 L726.5,1116.9 L744.9,1123.0 L761.2,1116.9 L769.4,1088.3 L767.3,1072.0 L779.6,1069.9"/><path d="M718.3,1137.3 L728.5,1180.2 L736.7,1212.9 L740.8,1231.3 L742.8,1284.4 L746.9,1313.0 L742.8,1337.6"/><path d="M321.3,1353.8 L321.3,1374.8 L352.8,1393.6 L359.1,1406.2 L367.4,1410.4 L361.2,1420.9 L354.9,1437.6 L348.6,1439.7 L350.7,1454.4 L363.3,1458.6 L384.2,1464.9 L421.9,1476.4"/><path d="M413.8,1472.2 L418.0,1473.2 L443.1,1481.6 L489.2,1527.7 L495.5,1529.8 L529.1,1563.3 L529.1,1588.5 L550.0,1590.6 L558.4,1613.6 L558.4,1640.9 L602.4,1760.3"/><path d="M732.3,1379.0 L736.5,1404.1 L770.0,1412.5 L778.4,1425.1 L795.2,1433.4 L803.5,1448.1 L801.4,1460.7 L803.5,1477.4 L809.8,1496.3"/><path d="M811.9,1697.4 L784.7,1701.6 L789.9,1760.3"/><path d="M803.8,1475.3 L808.0,1483.7 L816.4,1504.7 L818.5,1525.6 L816.4,1563.3 L829.0,1590.6 L839.4,1592.7 L824.8,1599.0 L820.6,1615.7 L829.0,1626.2 L839.4,1638.8 L833.1,1653.4 L826.9,1661.8 L824.8,1680.7 L826.9,1695.3"/><path d="M803.8,1702.7 L826.9,1695.3 L971.4,1672.3 L1080.4,1691.2 L1086.7,1716.3 L1113.9,1716.3 L1122.3,1701.6 L1137.0,1701.6 L1139.1,1707.9 L1128.6,1710.0 L1134.9,1714.2 L1147.4,1716.3 L1155.8,1726.8 L1201.9,1728.9"/><path d="M1183.8,1726.8 L1188.0,1726.8 L1213.1,1726.8 L1234.1,1729.9 L1229.9,1743.5 L1234.1,1760.3"/><path d="M299.7,600.0 L317.7,600.1 L347.9,619.6 L353.2,601.9 L362.1,580.6 L370.9,566.4 L379.8,548.7 L394.0,529.2 L404.6,521.2 L413.5,522.1 L424.2,534.5 L434.8,550.5 L437.9,556.2 L553.8,597.5"/><path d="M437.9,556.2 L433.3,562.0 L427.5,566.6 L426.4,580.3 L431.0,591.8 L428.7,607.9 L417.2,613.6 L417.2,625.1 L411.5,637.7 L414.9,649.2 L413.8,660.0 L418.0,670.0"/><path d="M553.8,597.5 L556.0,587.2 L549.2,582.6 L557.2,576.9 L549.2,570.0 L557.2,557.4 L553.8,549.3 L558.4,536.7 L556.0,525.2 L560.7,513.8 L572.1,511.5 L577.9,512.6 L583.6,518.4 L595.1,510.3 L601.9,504.6 L612.3,506.9 L620.0,504.6"/><path d="M742.8,1337.5 L737.0,1368.5 L720.8,1364.3 L717.1,1370.0 L722.3,1377.4 L732.3,1379.0"/><path d="M793.9,939.2 L780.5,940.0 L769.9,981.7 L776.1,984.3 L783.2,989.7 L785.0,1000.3 L779.7,1009.2 L770.8,1009.2 L766.4,1015.4 L767.2,1019.8 L776.1,1060.0 L779.6,1069.9"/></g>
<g fill="#fff"><circle cx="781.6" cy="301.8" r="6.8"/><circle cx="1446.4" cy="415.1" r="6.8"/><circle cx="471.4" cy="501.4" r="6.8"/><circle cx="687.5" cy="554" r="6.8"/><circle cx="1008.2" cy="544.9" r="6.8"/><circle cx="452.7" cy="716.5" r="6.8"/><circle cx="1217.6" cy="712.4" r="6.8"/><circle cx="593.7" cy="936.1" r="6.8"/><circle cx="1219.7" cy="952.4" r="6.8"/><circle cx="816.2" cy="987.2" r="6.8"/><circle cx="373.2" cy="1019.9" r="6.8"/><circle cx="596.3" cy="1080.1" r="6.8"/><circle cx="999" cy="1087.3" r="6.8"/><circle cx="1019.4" cy="1264" r="6.8"/><circle cx="538.5" cy="1320.2" r="6.8"/><circle cx="1429.1" cy="1321.2" r="6.8"/><circle cx="226.2" cy="1351.9" r="6.8"/><circle cx="403" cy="1455.4" r="6.8"/><circle cx="1242.5" cy="1499.4" r="6.8"/><circle cx="542.7" cy="1578" r="6.8"/><circle cx="757.3" cy="1597.2" r="6.8"/><circle cx="219.1" cy="1647.2" r="6.8"/></g>
<g fill="#fff" font-family="Liberation Mono" font-size="30.8"><text transform="translate(790.2,290.8) scale(1,1.08)">METÁN</text><text transform="translate(1455.0,404.1) scale(1,1.08)">MONTE QUEMADO</text><text transform="translate(480.0,490.4) scale(1,1.08)">CAFAYATE</text><text transform="translate(696.1,543.0) scale(1,1.08)">TRANCAS</text><text transform="translate(1016.8,533.9) scale(1,1.08)">NUEVA ESPERANZA</text><text transform="translate(461.3,705.5) scale(1,1.08)">SANTA MARÍA</text><text transform="translate(1226.2,701.4) scale(1,1.08)">SANTOS LUGARES</text><text transform="translate(602.3,925.1) scale(1,1.08)">CONCEPCIÓN</text><text transform="translate(1228.3,941.4) scale(1,1.08)">CASPI CORRAL</text><text transform="translate(824.8,976.2) scale(1,1.08)">T. DE RÍO HONDO</text><text transform="translate(381.8,1008.9) scale(1,1.08)">ANDALGALÁ</text><text transform="translate(604.9,1069.1) scale(1,1.08)">LA COCHA</text><text transform="translate(1007.6,1076.3) scale(1,1.08)">SANTIAGO DEL ESTERO</text><text transform="translate(1028.0,1253.0) scale(1,1.08)">LORETO</text><text transform="translate(547.1,1309.2) scale(1,1.08)">S. F. V. C.</text><text transform="translate(1437.7,1310.2) scale(1,1.08)">AÑATUYA</text><text transform="translate(234.8,1340.9) scale(1,1.08)">AIMOGASTA</text><text transform="translate(411.6,1444.4) scale(1,1.08)">CHUMBICHA</text><text transform="translate(1251.1,1488.4) scale(1,1.08)">LOS TELARES</text><text transform="translate(551.3,1567.0) scale(1,1.08)">SAN MARTÍN</text><text transform="translate(765.9,1586.2) scale(1,1.08)">RECREO</text><text transform="translate(227.7,1636.2) scale(1,1.08)">LA RIOJA</text></g>
<rect x="35" y="1652" width="332" height="102" fill="#6b6b6b" fill-opacity="0.85"/>
<rect x="49" y="1667" width="303" height="72" fill="none" stroke="#ffa500" stroke-width="5.8"/>
<g fill="#fff" font-family="Liberation Mono" font-size="22.45">
<text x="60.5" y="1697">Avisos Meteorológicos</text>
<text x="60.5" y="1722.4">a Muy Corto Plazo</text>
</g>
</g>

<!-- right panel -->
<rect x="1578" y="218.5" width="151" height="1540" fill="#1b1b1b" stroke="#000" stroke-width="3"/>
<g clip-path="url(#rpclip)">
<path d="M1589,254 L1596,251 L1605,250.4 L1622,250.4 L1632,251.5 L1636.7,254 V1722 L1632,1725 L1620,1727.2 L1605,1727.2 L1595,1725.5 L1589,1722 V1691.8 H1587.3 V1644.5 H1583.8 V1588 H1582 V389.8 H1584.3 V333.3 H1587.3 V285 H1589 Z" fill="#3c6597"/>
<path d="M1690,891 L1712,889 L1716,893 L1706,897 L1692,897 Z" fill="#3585bd"/>
<line x1="1629.6" y1="220" x2="1629.6" y2="1756" stroke="#fff" stroke-width="1.6"/>
<line x1="1679.7" y1="220" x2="1679.7" y2="1756" stroke="#fff" stroke-width="1.6"/>
<g font-family="Liberation Sans" font-size="25" letter-spacing="0.9" fill="#fff">
<text transform="translate(1607.5,219.3) rotate(90)">5 km</text>
<text transform="translate(1656,219.3) rotate(90)">10 km</text>
<text transform="translate(1706,219.3) rotate(90)">15 km</text>
</g>
</g>

<!-- colorbar -->
<rect x="1729" y="218.5" width="38" height="120.8" fill="#88dcba"/><rect x="1729" y="338.7" width="38" height="48.4" fill="#95e0c3"/><rect x="1729" y="386.5" width="38" height="25.5" fill="#a6e6ce"/><rect x="1729" y="411.4" width="38" height="25.2" fill="#b8ecd8"/><rect x="1729" y="436.0" width="38" height="24.6" fill="#caf1e3"/><rect x="1729" y="460.0" width="38" height="24.4" fill="#def6ee"/><rect x="1729" y="483.8" width="38" height="25.1" fill="#ffffff"/><rect x="1729" y="508.3" width="38" height="24.3" fill="#990099"/><rect x="1729" y="532.0" width="38" height="24.6" fill="#b000b0"/><rect x="1729" y="556.0" width="38" height="24.4" fill="#cc00cc"/><rect x="1729" y="579.8" width="38" height="24.3" fill="#e800e8"/><rect x="1729" y="603.5" width="38" height="24.7" fill="#d6009a"/><rect x="1729" y="627.6" width="38" height="25.1" fill="#c4005c"/><rect x="1729" y="652.1" width="38" height="24.3" fill="#9c0000"/><rect x="1729" y="675.8" width="38" height="24.3" fill="#b40010"/><rect x="1729" y="699.5" width="38" height="25.1" fill="#c40018"/><rect x="1729" y="724.0" width="38" height="24.6" fill="#d0001c"/><rect x="1729" y="748.0" width="38" height="24.8" fill="#ea0e2e"/><rect x="1729" y="772.2" width="38" height="24.7" fill="#de7e1a"/><rect x="1729" y="796.3" width="38" height="24.7" fill="#d8961a"/><rect x="1729" y="820.4" width="38" height="24.7" fill="#d0aa22"/><rect x="1729" y="844.5" width="38" height="24.8" fill="#c6c630"/><rect x="1729" y="868.7" width="38" height="24.7" fill="#d0d232"/><rect x="1729" y="892.8" width="38" height="24.3" fill="#d8dc36"/><rect x="1729" y="916.5" width="38" height="24.7" fill="#e2e43a"/><rect x="1729" y="940.6" width="38" height="25.0" fill="#f0ee3e"/><rect x="1729" y="965.0" width="38" height="24.5" fill="#226e1c"/><rect x="1729" y="988.9" width="38" height="24.7" fill="#2a821e"/><rect x="1729" y="1013.0" width="38" height="24.8" fill="#329622"/><rect x="1729" y="1037.2" width="38" height="24.4" fill="#3aa826"/><rect x="1729" y="1061.0" width="38" height="24.3" fill="#42ba2a"/><rect x="1729" y="1084.7" width="38" height="24.8" fill="#48cc2e"/><rect x="1729" y="1108.9" width="38" height="24.8" fill="#4ede32"/><rect x="1729" y="1133.1" width="38" height="24.8" fill="#58f23a"/><rect x="1729" y="1157.3" width="38" height="25.2" fill="#2eb0dc"/><rect x="1729" y="1181.9" width="38" height="24.8" fill="#28a2d2"/><rect x="1729" y="1206.1" width="38" height="48.5" fill="#2a94c4"/><rect x="1729" y="1254.0" width="38" height="48.6" fill="#2e86b8"/><rect x="1729" y="1302.0" width="38" height="48.6" fill="#347aac"/><rect x="1729" y="1350.0" width="38" height="72.2" fill="#386c9e"/><rect x="1729" y="1421.6" width="38" height="72.8" fill="#3a6294"/><rect x="1729" y="1493.8" width="38" height="73.5" fill="#3c5888"/><rect x="1729" y="1566.7" width="38" height="72.8" fill="#3c4e7c"/><rect x="1729" y="1638.9" width="38" height="119.2" fill="#3c416c"/>
<rect x="1729" y="218.5" width="38" height="1540" fill="none" stroke="#000" stroke-width="2.5"/>
<g font-family="Liberation Sans" font-size="30.5" fill="#000"><line x1="1767" y1="242.9" x2="1777" y2="242.9" stroke="#000" stroke-width="2.2"/><text x="1787.6" y="253.7">75</text><line x1="1767" y1="323.1" x2="1777" y2="323.1" stroke="#000" stroke-width="2.2"/><text x="1787.6" y="333.9">70</text><line x1="1767" y1="403.3" x2="1777" y2="403.3" stroke="#000" stroke-width="2.2"/><text x="1787.6" y="414.1">65</text><line x1="1767" y1="483.5" x2="1777" y2="483.5" stroke="#000" stroke-width="2.2"/><text x="1787.6" y="494.3">60</text><line x1="1767" y1="563.8" x2="1777" y2="563.8" stroke="#000" stroke-width="2.2"/><text x="1787.6" y="574.6">55</text><line x1="1767" y1="644.0" x2="1777" y2="644.0" stroke="#000" stroke-width="2.2"/><text x="1787.6" y="654.8">50</text><line x1="1767" y1="724.2" x2="1777" y2="724.2" stroke="#000" stroke-width="2.2"/><text x="1787.6" y="735.0">45</text><line x1="1767" y1="804.4" x2="1777" y2="804.4" stroke="#000" stroke-width="2.2"/><text x="1787.6" y="815.2">40</text><line x1="1767" y1="884.6" x2="1777" y2="884.6" stroke="#000" stroke-width="2.2"/><text x="1787.6" y="895.4">35</text><line x1="1767" y1="964.8" x2="1777" y2="964.8" stroke="#000" stroke-width="2.2"/><text x="1787.6" y="975.6">30</text><line x1="1767" y1="1045.0" x2="1777" y2="1045.0" stroke="#000" stroke-width="2.2"/><text x="1787.6" y="1055.8">25</text><line x1="1767" y1="1125.3" x2="1777" y2="1125.3" stroke="#000" stroke-width="2.2"/><text x="1787.6" y="1136.1">20</text><line x1="1767" y1="1205.5" x2="1777" y2="1205.5" stroke="#000" stroke-width="2.2"/><text x="1787.6" y="1216.3">15</text><line x1="1767" y1="1285.7" x2="1777" y2="1285.7" stroke="#000" stroke-width="2.2"/><text x="1787.6" y="1296.5">10</text><line x1="1767" y1="1365.9" x2="1777" y2="1365.9" stroke="#000" stroke-width="2.2"/><text x="1787.6" y="1376.7">5</text><line x1="1767" y1="1446.1" x2="1777" y2="1446.1" stroke="#000" stroke-width="2.2"/><text x="1787.6" y="1456.9">0</text><line x1="1767" y1="1526.3" x2="1777" y2="1526.3" stroke="#000" stroke-width="2.2"/><text x="1787.6" y="1537.1">−5</text><line x1="1767" y1="1606.6" x2="1777" y2="1606.6" stroke="#000" stroke-width="2.2"/><text x="1787.6" y="1617.4">−10</text><line x1="1767" y1="1686.8" x2="1777" y2="1686.8" stroke="#000" stroke-width="2.2"/><text x="1787.6" y="1697.6">−15</text></g>

<!-- logos -->
<g>
 <path fill="#ffb300" fill-rule="evenodd" d="M148.3,1814.6 A47.65,47.65 0 1,0 147,1856.6 L128,1852.9 A29.5,29.5 0 1,1 124.6,1811.9 Z"/>
 <path fill="#0593d5" d="M99.2,1820 C106,1815 112,1814.5 117.8,1814.9 C126,1815.5 134,1818.7 141.5,1818.7 C150,1818.7 160,1817 166.6,1813.9 L166.6,1826.1 C160,1830 150,1832.2 141.5,1832.2 C134,1832.2 126,1828.1 117.8,1828.1 C112,1828.1 106,1829 99.2,1832.6 Z"/>
 <path fill="#0593d5" transform="translate(0,20.3)" d="M99.2,1820 C106,1815 112,1814.5 117.8,1814.9 C126,1815.5 134,1818.7 141.5,1818.7 C150,1818.7 160,1817 166.6,1813.9 L166.6,1826.1 C160,1830 150,1832.2 141.5,1832.2 C134,1832.2 126,1828.1 117.8,1828.1 C112,1828.1 106,1829 99.2,1832.6 Z"/>
 <g font-family="Liberation Sans" font-size="27.5" letter-spacing="2.5" fill="#1e1e1e">
  <text x="176.5" y="1808">Servicio</text>
  <text x="176.5" y="1833.7">Meteorológico</text>
  <text x="176.5" y="1860.2">Nacional</text>
 </g>
 <text x="180" y="1880" font-family="Liberation Sans" font-weight="bold" font-size="16.5" letter-spacing="1.7" fill="#1e1e1e">Argentina</text>
</g>
<use href="#coat" x="533" y="1840.6"/>
<g font-family="Liberation Serif" fill="#1f2a52">
 <text x="583.3" y="1828" font-size="28.5" font-weight="bold" letter-spacing="0.6">Ministerio</text>
 <text x="583.3" y="1853.9" font-size="28.5" font-weight="bold" letter-spacing="0.15">de Defensa</text>
 <text x="583.3" y="1873.5" font-size="17" letter-spacing="0.55">República Argentina</text>
</g>
<use href="#coat" x="894" y="1841.4"/>
<g font-family="Liberation Serif" fill="#1f2a52">
 <text x="946.4" y="1827.3" font-size="28.5" font-weight="bold" letter-spacing="0.9">Ministerio</text>
 <text x="946.4" y="1853" font-size="28.5" font-weight="bold" letter-spacing="0.3">de Economía</text>
 <text x="946.4" y="1873.5" font-size="17" letter-spacing="0.65">República Argentina</text>
</g>
</svg>
</body></html>
